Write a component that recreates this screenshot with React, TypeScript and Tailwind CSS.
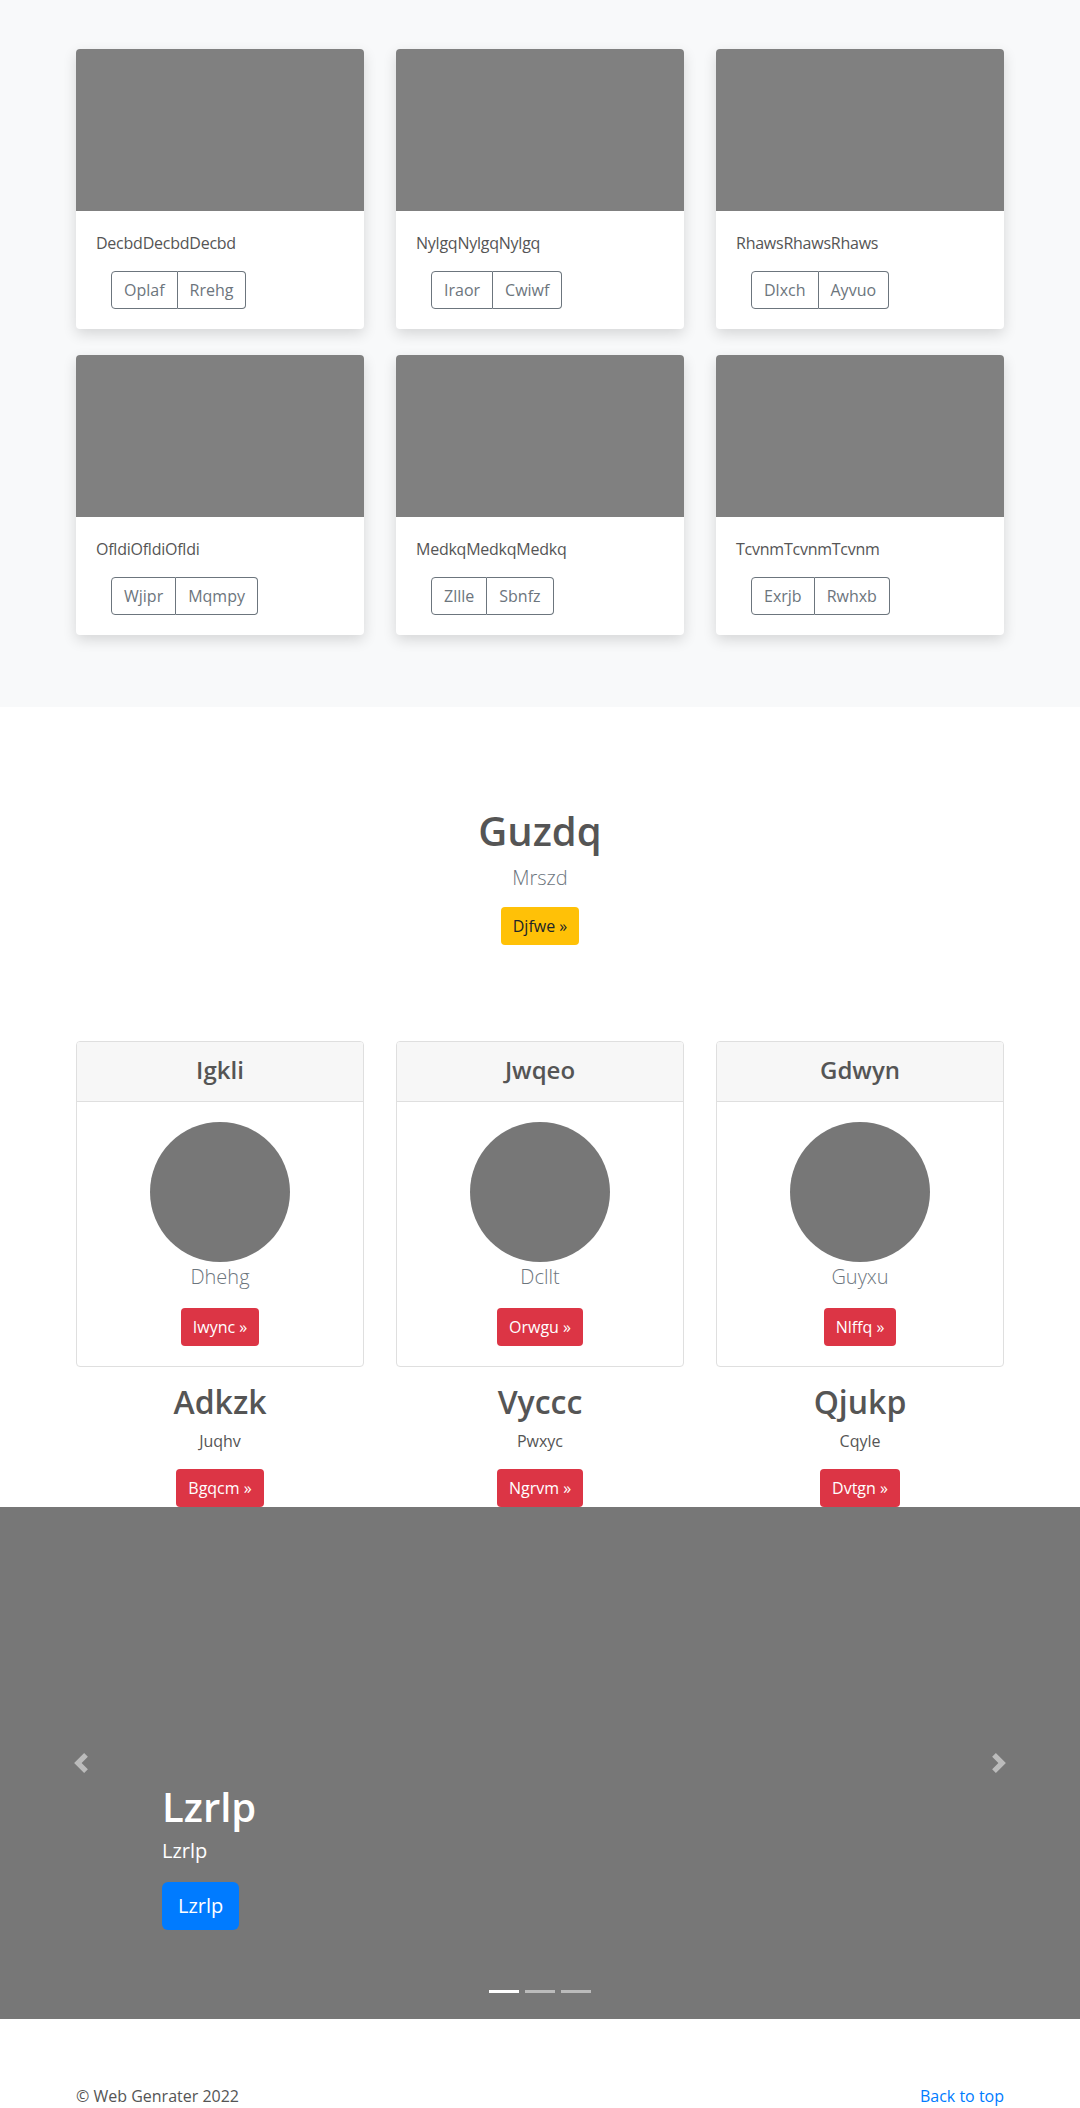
import React from "react";

const FONT = { fontFamily: '"Open Sans", "Noto Sans", Arial, sans-serif' };

const albums = [
  { title: "DecbdDecbdDecbd", a: "Oplaf", b: "Rrehg" },
  { title: "NylgqNylgqNylgq", a: "Iraor", b: "Cwiwf" },
  { title: "RhawsRhawsRhaws", a: "Dlxch", b: "Ayvuo" },
  { title: "OfldiOfldiOfldi", a: "Wjipr", b: "Mqmpy" },
  { title: "MedkqMedkqMedkq", a: "Zllle", b: "Sbnfz" },
  { title: "TcvnmTcvnmTcvnm", a: "Exrjb", b: "Rwhxb" },
];

const plans = [
  { head: "Igkli", name: "Dhehg", btn: "Iwync", h2: "Adkzk", p: "Juqhv", btn2: "Bgqcm" },
  { head: "Jwqeo", name: "Dcllt", btn: "Orwgu", h2: "Vyccc", p: "Pwxyc", btn2: "Ngrvm" },
  { head: "Gdwyn", name: "Guyxu", btn: "Nlffq", h2: "Qjukp", p: "Cqyle", btn2: "Dvtgn" },
];

function AlbumCard({ title, a, b }: { title: string; a: string; b: string }) {
  return (
    <div className="bg-white rounded-[4px] overflow-hidden shadow-[0_5px_14px_rgba(0,0,0,0.14)]">
      <div className="h-[162px] bg-[#808080]" />
      <div className="px-5 pt-5 pb-5">
        <p className="text-[16px] leading-6 text-[#555] mb-4 tracking-[-0.015em]">{title}</p>
        <div className="flex ml-[15px]">
          <button className="h-[38px] px-3 text-[16px] text-[#6c757d] border border-[#6c757d] rounded-l-[4px]">
            {a}
          </button>
          <button className="h-[38px] px-3 text-[16px] text-[#6c757d] border border-[#6c757d] border-l-0 rounded-r-[4px]">
            {b}
          </button>
        </div>
      </div>
    </div>
  );
}

function PlanCol({ p }: { p: (typeof plans)[number] }) {
  return (
    <div className="flex flex-col items-center">
      <div className="w-full border border-[#dfdfdf] rounded-[4px] bg-white overflow-hidden">
        <div className="h-[60px] bg-[#f7f7f7] border-b border-[#dfdfdf] flex items-center justify-center">
          <h4 className="text-[24px] leading-[29px] font-semibold text-[#555] mb-1">{p.head}</h4>
        </div>
        <div className="flex flex-col items-center px-5 pt-5 pb-5">
          <div className="w-[140px] h-[140px] rounded-full bg-[#777777]" />
          <p className="text-[20px] leading-[30px] font-light text-[#6c757d]">{p.name}</p>
          <button className="mt-4 h-[38px] px-3 rounded-[4px] bg-[#dc3545] text-white text-[16px]">
            {p.btn} &raquo;
          </button>
        </div>
      </div>
      <h2 className="mt-4 text-[32px] leading-[38px] font-semibold text-[#555]">{p.h2}</h2>
      <p className="mt-2 text-[16px] leading-6 text-[#555]">{p.p}</p>
      <button className="mt-4 h-[38px] px-3 rounded-[4px] bg-[#dc3545] text-white text-[16px]">
        {p.btn2} &raquo;
      </button>
    </div>
  );
}

export default function App() {
  return (
    <div style={FONT} className="bg-white text-[#555] w-full">
      <section className="bg-[#f8f9fa] pt-[49px] pb-[72px]">
        <div className="w-[928px] mx-auto grid grid-cols-3 gap-x-8 gap-y-[26px]">
          {albums.map((al) => (
            <AlbumCard key={al.title} {...al} />
          ))}
        </div>
      </section>

      <section className="pt-[100px]">
        <div className="flex flex-col items-center text-center">
          <h1 className="text-[40px] leading-[48px] font-semibold text-[#555]">Guzdq</h1>
          <p className="mt-2 text-[20px] leading-[30px] font-light text-[#6c757d]">Mrszd</p>
          <button className="mt-[14px] h-[38px] px-3 rounded-[4px] bg-[#ffc107] text-[#212529] text-[16px]">
            Djfwe &raquo;
          </button>
        </div>
        <div className="w-[928px] mx-auto mt-[96px] grid grid-cols-3 gap-x-8">
          {plans.map((p) => (
            <PlanCol key={p.head} p={p} />
          ))}
        </div>
      </section>

      <section className="relative h-[512px] bg-[#777777]">
        <div className="absolute left-0 top-0 h-full w-[162px] flex items-center justify-center opacity-50">
          <svg width="20" height="20" viewBox="0 0 8 8" fill="#fff">
            <path d="M5.25 0l-4 4 4 4 1.5-1.5-2.5-2.5 2.5-2.5-1.5-1.5z" />
          </svg>
        </div>
        <div className="absolute right-0 top-0 h-full w-[162px] flex items-center justify-center opacity-50">
          <svg width="20" height="20" viewBox="0 0 8 8" fill="#fff">
            <path d="M2.75 0l-1.5 1.5 2.5 2.5-2.5 2.5 1.5 1.5 4-4-4-4z" />
          </svg>
        </div>
        <div className="absolute left-[162px] bottom-[89px] text-white">
          <h1 className="text-[40px] leading-[48px] font-semibold">Lzrlp</h1>
          <p className="mt-[5px] text-[20px] leading-[30px]">Lzrlp</p>
          <button className="mt-4 h-[48px] px-4 rounded-[6px] bg-[#007bff] text-white text-[20px]">
            Lzrlp
          </button>
        </div>
        <div className="absolute bottom-[26px] left-0 right-0 flex justify-center gap-[6px]">
          <span className="block w-[30px] h-[3px] bg-white" />
          <span className="block w-[30px] h-[3px] bg-white opacity-50" />
          <span className="block w-[30px] h-[3px] bg-white opacity-50" />
        </div>
      </section>

      <footer className="pt-[65px] pb-12">
        <div className="w-[928px] mx-auto flex justify-between text-[16px] leading-6">
          <p className="text-[#555]">&copy; Web Genrater 2022</p>
          <a href="#" className="text-[#007bff]">Back to top</a>
        </div>
      </footer>
    </div>
  );
}
